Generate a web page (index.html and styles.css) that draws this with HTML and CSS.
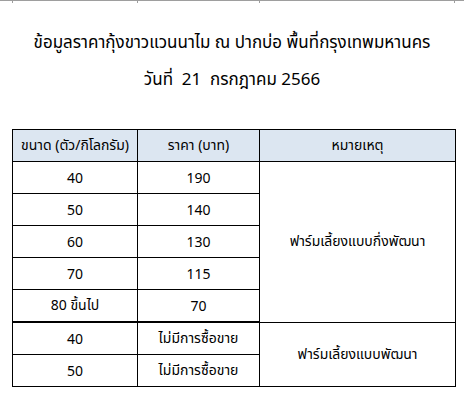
FILE: index.html
```html
<!DOCTYPE html>
<html lang="th">
<head>
<meta charset="utf-8">
<link rel="stylesheet" href="styles.css">
</head>
<body>
<div class="grid-top">
  <span class="gc c0"></span><span class="gc c1"></span><span class="gc c2"></span><span class="gc c3"></span><span class="gc c4"></span>
</div>
<div class="title">
  <p class="t1">ข้อมูลราคากุ้งขาวแวนนาไม ณ ปากบ่อ พื้นที่กรุงเทพมหานคร</p>
  <p class="t2">วันที่&nbsp; 21&nbsp; กรกฎาคม 2566</p>
</div>
<table class="prices">
  <colgroup><col class="w1"><col class="w2"><col class="w3"></colgroup>
  <thead>
    <tr><th>ขนาด (ตัว/กิโลกรัม)</th><th>ราคา (บาท)</th><th>หมายเหตุ</th></tr>
  </thead>
  <tbody>
    <tr><td>40</td><td>190</td><td rowspan="5">ฟาร์มเลี้ยงแบบกึ่งพัฒนา</td></tr>
    <tr><td>50</td><td>140</td></tr>
    <tr><td>60</td><td>130</td></tr>
    <tr><td>70</td><td>115</td></tr>
    <tr class="last"><td>80 ขึ้นไป</td><td>70</td></tr>
    <tr class="first"><td>40</td><td>ไม่มีการซื้อขาย</td><td rowspan="2">ฟาร์มเลี้ยงแบบพัฒนา</td></tr>
    <tr><td>50</td><td>ไม่มีการซื้อขาย</td></tr>
  </tbody>
</table>
</body>
</html>
```
FILE: styles.css
```css
html, body {
  margin: 0;
  padding: 0;
  background: #fff;
}
body {
  width: 464px;
  height: 407px;
  overflow: hidden;
  font-family: Tahoma, "Noto Sans", "Noto Sans Thai", "DejaVu Sans", sans-serif;
  color: #000;
}
.grid-top {
  display: flex;
  height: 2px;
  border-top: 1px solid #9e9e9e;
}
.gc {
  display: block;
  height: 2px;
  border-right: 1px solid #9e9e9e;
}
.c0 { width: 12px; }
.c1 { width: 124px; }
.c2 { width: 121px; }
.c3 { width: 194px; }
.c4 { border-right: none; flex: 1; }
.title {
  text-align: center;
  padding-top: 20px;
}
.title p {
  margin: 0;
  font-size: 17px;
  line-height: 37px;
}
.prices {
  margin: 32px 0 0 12px;
  border-collapse: collapse;
  table-layout: fixed;
  width: 443px;
  font-size: 14px;
}
.w1 { width: 125px; }
.w2 { width: 122px; }
.w3 { width: 196px; }
.prices th, .prices td {
  border: 1px solid #000;
  height: 31px;
  padding: 0;
  text-align: center;
  vertical-align: middle;
  font-weight: normal;
}
.prices th {
  background: #dce6f1;
}
.prices tr.last td {
  border-bottom: 2px solid #000;
}
```
